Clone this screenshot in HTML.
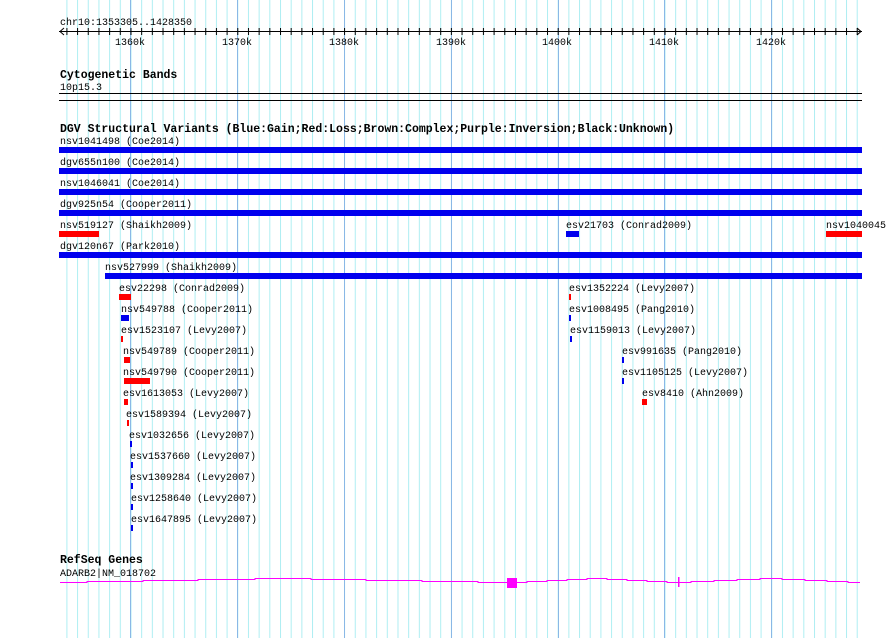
<!DOCTYPE html>
<html><head><meta charset="utf-8"><style>
html,body{margin:0;padding:0;background:#fff;}
svg{display:block;}
text{font-family:"Liberation Mono",monospace;font-size:10px;fill:#000;}
.b{font-weight:bold;font-size:11.5px;}
</style></head><body>
<svg width="890" height="638" viewBox="0 0 890 638" xmlns="http://www.w3.org/2000/svg">
<defs>
<pattern id="g" x="66.4" y="0" width="10.68" height="638" patternUnits="userSpaceOnUse">
<rect x="0" y="0" width="1" height="638" fill="#aeeef2"/>
</pattern>
<pattern id="t" x="66.4" y="0" width="10.68" height="638" patternUnits="userSpaceOnUse">
<rect x="0" y="28" width="1" height="7" fill="#000"/>
</pattern>
</defs>
<rect x="60" y="0" width="800" height="638" fill="url(#g)"/>
<g fill="#8ab8e6">
<rect x="130" y="0" width="1" height="638"/><rect x="237" y="0" width="1" height="638"/>
<rect x="344" y="0" width="1" height="638"/><rect x="451" y="0" width="1" height="638"/>
<rect x="558" y="0" width="1" height="638"/><rect x="664" y="0" width="1" height="638"/>
<rect x="771" y="0" width="1" height="638"/>
</g>
<!-- ruler -->
<text x="60" y="25">chr10:1353305..1428350</text>
<rect x="59" y="31" width="803" height="1" fill="#000"/>
<rect x="60" y="0" width="800" height="40" fill="url(#t)"/>
<path d="M60 31.5 L64 28 M60 31.5 L64 35 M861 31.5 L857 28 M861 31.5 L857 35" stroke="#000" stroke-width="1" fill="none"/>
<text x="115" y="45">1360k</text><text x="222" y="45">1370k</text><text x="329" y="45">1380k</text>
<text x="436" y="45">1390k</text><text x="542" y="45">1400k</text><text x="649" y="45">1410k</text>
<text x="756" y="45">1420k</text>
<!-- cyto -->
<text x="60" y="78" class="b">Cytogenetic Bands</text>
<text x="60" y="90">10p15.3</text>
<rect x="59" y="93" width="803" height="1" fill="#000"/>
<rect x="59" y="100" width="803" height="1" fill="#000"/>
<!-- DGV -->
<text x="60" y="132" class="b">DGV Structural Variants (Blue:Gain;Red:Loss;Brown:Complex;Purple:Inversion;Black:Unknown)</text>
<text x="60" y="144">nsv1041498 (Coe2014)</text>
<text x="60" y="165">dgv655n100 (Coe2014)</text>
<text x="60" y="186">nsv1046041 (Coe2014)</text>
<text x="60" y="207">dgv925n54 (Cooper2011)</text>
<text x="60" y="228">nsv519127 (Shaikh2009)</text>
<text x="566" y="228">esv21703 (Conrad2009)</text>
<text x="826" y="228">nsv1040045</text>
<text x="60" y="249">dgv120n67 (Park2010)</text>
<text x="105" y="270">nsv527999 (Shaikh2009)</text>
<g fill="#0000ee">
<rect x="59" y="147" width="803" height="6"/>
<rect x="59" y="168" width="803" height="6"/>
<rect x="59" y="189" width="803" height="6"/>
<rect x="59" y="210" width="803" height="6"/>
<rect x="566" y="231" width="13" height="6"/>
<rect x="59" y="252" width="803" height="6"/>
<rect x="105" y="273" width="757" height="6"/>
</g>
<g fill="#ff0000">
<rect x="59" y="231" width="40" height="6"/>
<rect x="826" y="231" width="36" height="6"/>
</g>
<text x="119" y="291">esv22298 (Conrad2009)</text>
<text x="121" y="312">nsv549788 (Cooper2011)</text>
<text x="121" y="333">esv1523107 (Levy2007)</text>
<text x="123" y="354">nsv549789 (Cooper2011)</text>
<text x="123" y="375">nsv549790 (Cooper2011)</text>
<text x="123" y="396">esv1613053 (Levy2007)</text>
<text x="126" y="417">esv1589394 (Levy2007)</text>
<text x="129" y="438">esv1032656 (Levy2007)</text>
<text x="130" y="459">esv1537660 (Levy2007)</text>
<text x="130" y="480">esv1309284 (Levy2007)</text>
<text x="131" y="501">esv1258640 (Levy2007)</text>
<text x="131" y="522">esv1647895 (Levy2007)</text>
<text x="569" y="291">esv1352224 (Levy2007)</text>
<text x="569" y="312">esv1008495 (Pang2010)</text>
<text x="570" y="333">esv1159013 (Levy2007)</text>
<text x="622" y="354">esv991635 (Pang2010)</text>
<text x="622" y="375">esv1105125 (Levy2007)</text>
<text x="642" y="396">esv8410 (Ahn2009)</text>
<g fill="#ff0000">
<rect x="119" y="294" width="12" height="6"/>
<rect x="121" y="336" width="2" height="6"/>
<rect x="124" y="357" width="6" height="6"/>
<rect x="124" y="378" width="26" height="6"/>
<rect x="124" y="399" width="4" height="6"/>
<rect x="127" y="420" width="2" height="6"/>
<rect x="569" y="294" width="2" height="6"/>
<rect x="642" y="399" width="5" height="6"/>
</g>
<g fill="#0000ee">
<rect x="121" y="315" width="8" height="6"/>
<rect x="130" y="441" width="2" height="6"/>
<rect x="131" y="462" width="2" height="6"/>
<rect x="131" y="483" width="2" height="6"/>
<rect x="131" y="504" width="2" height="6"/>
<rect x="131" y="525" width="2" height="6"/>
<rect x="569" y="315" width="2" height="6"/>
<rect x="570" y="336" width="2" height="6"/>
<rect x="622" y="357" width="2" height="6"/>
<rect x="622" y="378" width="2" height="6"/>
</g>
<!-- RefSeq -->
<text x="60" y="563" class="b">RefSeq Genes</text>
<text x="60" y="576">ADARB2|NM_018702</text>
<path d="M60 582.5H87V581.5H143V580.5H198V579.5H255V578.5H311V579.5H366V580.5H422V581.5H478V582.5H527V581.5H547V580.5H567V579.5H587V578.5H607V579.5H627V580.5H647V581.5H667V582.5H691V581.5H714V580.5H737V579.5H760V578.5H782V579.5H805V580.5H827V581.5H848V582.5H860" stroke="#ff00ff" stroke-width="1" fill="none"/>
<rect x="507" y="578" width="10" height="10" fill="#ff00ff"/>
<rect x="678" y="577" width="1.5" height="10" fill="#ff00ff"/>
</svg>
</body></html>
